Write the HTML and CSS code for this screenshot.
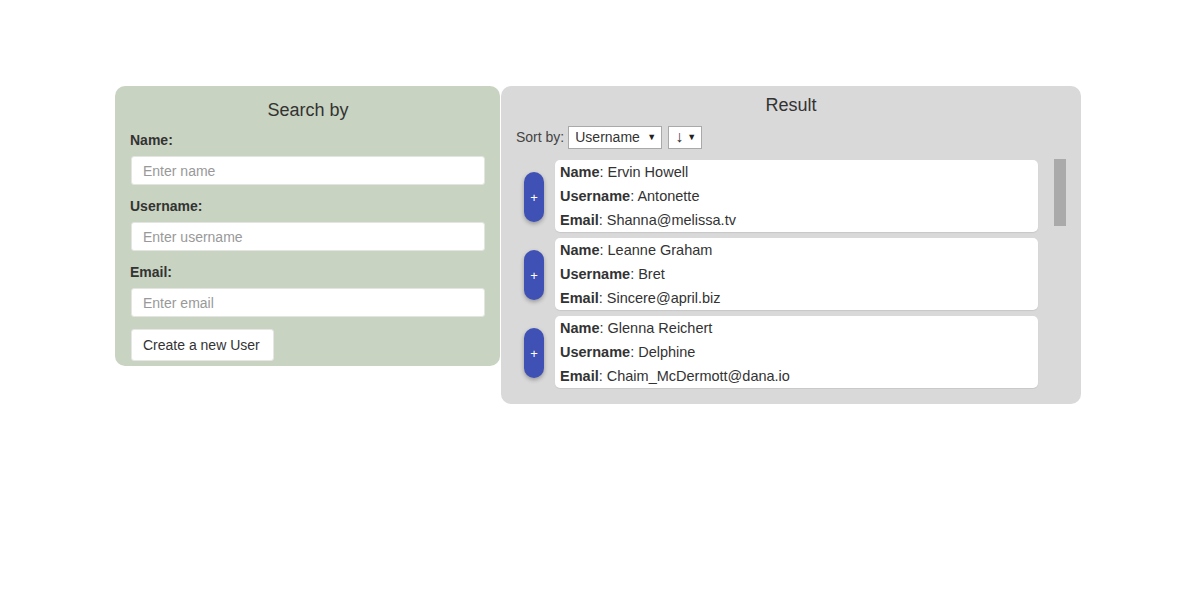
FILE: index.html
```html
<!DOCTYPE html>
<html>
<head>
<meta charset="utf-8">
<link rel="stylesheet" href="styles.css">
</head>
<body>
<div class="app">
  <section class="search">
    <h2 class="search-title">Search by</h2>
    <label class="lbl">Name:</label>
    <input class="inp" type="text" placeholder="Enter name">
    <label class="lbl">Username:</label>
    <input class="inp" type="text" placeholder="Enter username">
    <label class="lbl">Email:</label>
    <input class="inp" type="text" placeholder="Enter email">
    <button class="create">Create a new User</button>
  </section>
  <section class="result">
    <h2 class="result-title">Result</h2>
    <div class="sort">
      <span class="sort-label">Sort by:</span>
      <div class="sel sel-field">Username <span class="caret">▼</span></div>
      <div class="sel sel-dir"><span class="arrow">↓</span> <span class="caret">▼</span></div>
    </div>
    <div class="list-wrap">
      <div class="list">
        <div class="row"><button class="plus">+</button><div class="card"><div><b>Name</b>: Ervin Howell</div><div><b>Username</b>: Antonette</div><div><b>Email</b>: Shanna@melissa.tv</div></div></div>
        <div class="row"><button class="plus">+</button><div class="card"><div><b>Name</b>: Leanne Graham</div><div><b>Username</b>: Bret</div><div><b>Email</b>: Sincere@april.biz</div></div></div>
        <div class="row"><button class="plus">+</button><div class="card"><div><b>Name</b>: Glenna Reichert</div><div><b>Username</b>: Delphine</div><div><b>Email</b>: Chaim_McDermott@dana.io</div></div></div>
      </div>
      <div class="track"><div class="thumb"></div></div>
    </div>
  </section>
</div>
</body>
</html>
```
FILE: styles.css
```css
* { box-sizing: border-box; }
body {
  margin: 0;
  font-family: "Liberation Sans", Arial, sans-serif;
  color: #333;
  background: #fff;
}
.app {
  display: flex;
  align-items: flex-start;
  gap: 1px;
  padding: 86px 0 0 115px;
}
.search {
  width: 385px;
  background: #c9d3c1;
  border-radius: 10px;
  padding: 12px 15px 5px 16px;
  display: flex;
  flex-direction: column;
  align-items: stretch;
}
.search-title {
  margin: 0;
  font-size: 18px;
  font-weight: normal;
  line-height: 24px;
  text-align: center;
}
.lbl {
  display: block;
  font-size: 14px;
  font-weight: bold;
  line-height: 18px;
  margin-top: 12px;
  margin-bottom: 7px;
  margin-left: -1px;
}
.search-title + .lbl { margin-top: 9px; }
.inp {
  display: block;
  width: 100%;
  height: 29px;
  border: 1px solid #e3e6e0;
  border-radius: 3px;
  background: #fff;
  padding: 0 11px;
  font-family: inherit;
  font-size: 14px;
  color: #333;
  outline: none;
}
.inp::placeholder { color: #999; }
.create {
  align-self: flex-start;
  margin-top: 12px;
  height: 32px;
  width: 143px;
  padding: 0 11px;
  border: 1px solid #e6e6e6;
  border-radius: 3px;
  background: #fff;
  font-family: inherit;
  font-size: 14px;
  color: #333;
  text-align: left;
}
.result {
  width: 580px;
  background: #d9d9d9;
  border-radius: 10px;
  padding: 8px 15px 15px 15px;
}
.result-title {
  margin: 0;
  font-size: 18px;
  font-weight: normal;
  line-height: 22px;
  text-align: center;
}
.sort {
  display: flex;
  align-items: center;
  gap: 6px;
  margin-top: 10px;
  height: 22px;
  font-size: 14px;
}
.sort-label { margin-right: -2px; color: #444; }
.sel {
  height: 23px;
  border: 1px solid #a9a9a9;
  background: #fff;
  display: flex;
  align-items: center;
  justify-content: space-between;
  padding: 0 5px 0 6px;
  font-size: 14px;
  color: #333;
}
.sel-field { width: 94px; }
.sel-dir { width: 34px; }
.arrow { font-size: 16px; }
.caret { font-size: 9px; color: #222; }
.list-wrap {
  margin-top: 11px;
  height: 230px;
  display: flex;
}
.list {
  flex: 1;
  overflow: hidden;
  padding-top: 1px;
  display: flex;
  flex-direction: column;
  gap: 6px;
}
.track { width: 12px; }
.thumb { height: 67px; background: #aaa; }
.row {
  display: flex;
  align-items: center;
  flex-shrink: 0;
  padding-left: 8px;
  padding-right: 16px;
}
.plus {
  width: 20px;
  height: 50px;
  border: none;
  border-radius: 10px;
  background: #3f51b5;
  color: #fff;
  font-size: 13px;
  padding: 0;
  margin-top: 2px;
  box-shadow: 0 2px 4px rgba(0,0,0,0.3);
  font-family: inherit;
}
.card {
  flex: 1;
  margin-left: 11px;
  background: #fff;
  border-radius: 5px;
  padding: 0 5px;
  box-shadow: 0 1px 1px rgba(0,0,0,0.08);
  font-size: 14.5px;
  line-height: 24px;
}
.card b { font-weight: bold; }
```
